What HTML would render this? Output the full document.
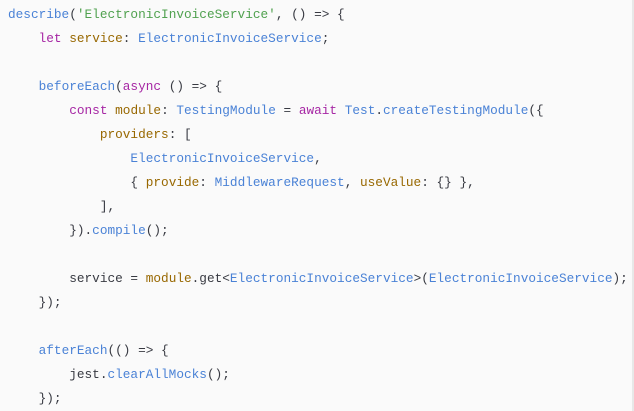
<!DOCTYPE html>
<html><head><style>
html,body{margin:0;padding:0;}
body{width:634px;height:411px;background:#fafafa;overflow:hidden;position:relative;}
pre{margin:0;padding:3px 0 0 8px;font-family:"Liberation Mono",monospace;font-size:12.75px;line-height:24px;color:#383a42;white-space:pre;}
.f{color:#4a82d6}.k{color:#a626a4}.v{color:#986801}.s{color:#50a14f}.t{color:#4a82d6}
.edge{position:absolute;right:0;top:0;width:2px;height:411px;background:#e8e8e8;}
</style></head><body>
<pre><span class="f">describe</span>(<span class="s">'ElectronicInvoiceService'</span>, () =&gt; {
    <span class="k">let</span> <span class="v">service</span>: <span class="t">ElectronicInvoiceService</span>;

    <span class="f">beforeEach</span>(<span class="k">async</span> () =&gt; {
        <span class="k">const</span> <span class="v">module</span>: <span class="t">TestingModule</span> = <span class="k">await</span> <span class="t">Test</span>.<span class="f">createTestingModule</span>({
            <span class="v">providers</span>: [
                <span class="t">ElectronicInvoiceService</span>,
                { <span class="v">provide</span>: <span class="t">MiddlewareRequest</span>, <span class="v">useValue</span>: {} },
            ],
        }).<span class="f">compile</span>();

        service = <span class="v">module</span>.get&lt;<span class="t">ElectronicInvoiceService</span>&gt;(<span class="t">ElectronicInvoiceService</span>);
    });

    <span class="f">afterEach</span>(() =&gt; {
        jest.<span class="f">clearAllMocks</span>();
    });</pre>
<div class="edge"></div>
</body></html>
